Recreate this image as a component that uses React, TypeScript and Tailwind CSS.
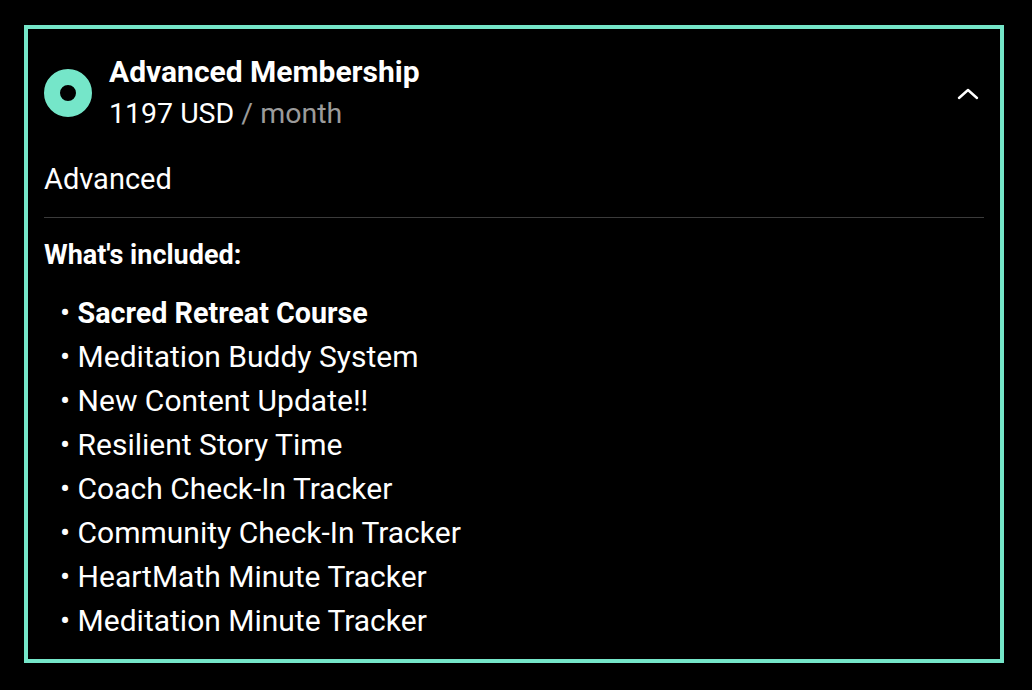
import React from "react";

const features = [
  { label: "Sacred Retreat Course", bold: true },
  { label: "Meditation Buddy System" },
  { label: "New Content Update!!" },
  { label: "Resilient Story Time" },
  { label: "Coach Check-In Tracker" },
  { label: "Community Check-In Tracker" },
  { label: "HeartMath Minute Tracker" },
  { label: "Meditation Minute Tracker" },
];

const App = () => {
  return (
    <div className="w-[1032px] h-[690px] bg-black font-['Roboto',sans-serif] text-white pt-[25px] pl-[24px]">
      <div className="w-[980px] h-[638px] border-4 border-[#75e6c9] px-4 pt-[23px]">
        {/* Header */}
        <div className="flex items-center">
          <div className="w-12 h-12 rounded-full border-[16px] border-[#75e6c9] shrink-0" />
          <div className="ml-[17px] flex-1">
            <div className="text-[30px] font-bold leading-[40px]">Advanced Membership</div>
            <div className="mt-[2px] text-[28.5px] leading-[40px]">
              1197 USD <span className="text-[#9b9b9b]">/ month</span>
            </div>
          </div>
          <svg width="24" height="24" viewBox="0 0 24 24" className="mr-[4px]" fill="none" stroke="white" strokeWidth="2.4" strokeLinecap="round" strokeLinejoin="round">
            <path d="M3 17L12 9L21 17" />
          </svg>
        </div>

        <div className="mt-[25px] text-[29px] leading-[40px]">Advanced</div>
        <div className="mt-[18px] h-px bg-[#3b3b3b]" />

        <div className="mt-[19px] text-[27px] font-bold leading-[36px]">What's included:</div>

        <ul className="mt-[18px] pl-[16px]">
          {features.map((f) => (
            <li key={f.label} className="text-[30px] leading-[44px]">
              •{" "}
              {f.bold ? <span className="text-[28.7px] font-bold">{f.label}</span> : f.label}
            </li>
          ))}
        </ul>
      </div>
    </div>
  );
};

export default App;
